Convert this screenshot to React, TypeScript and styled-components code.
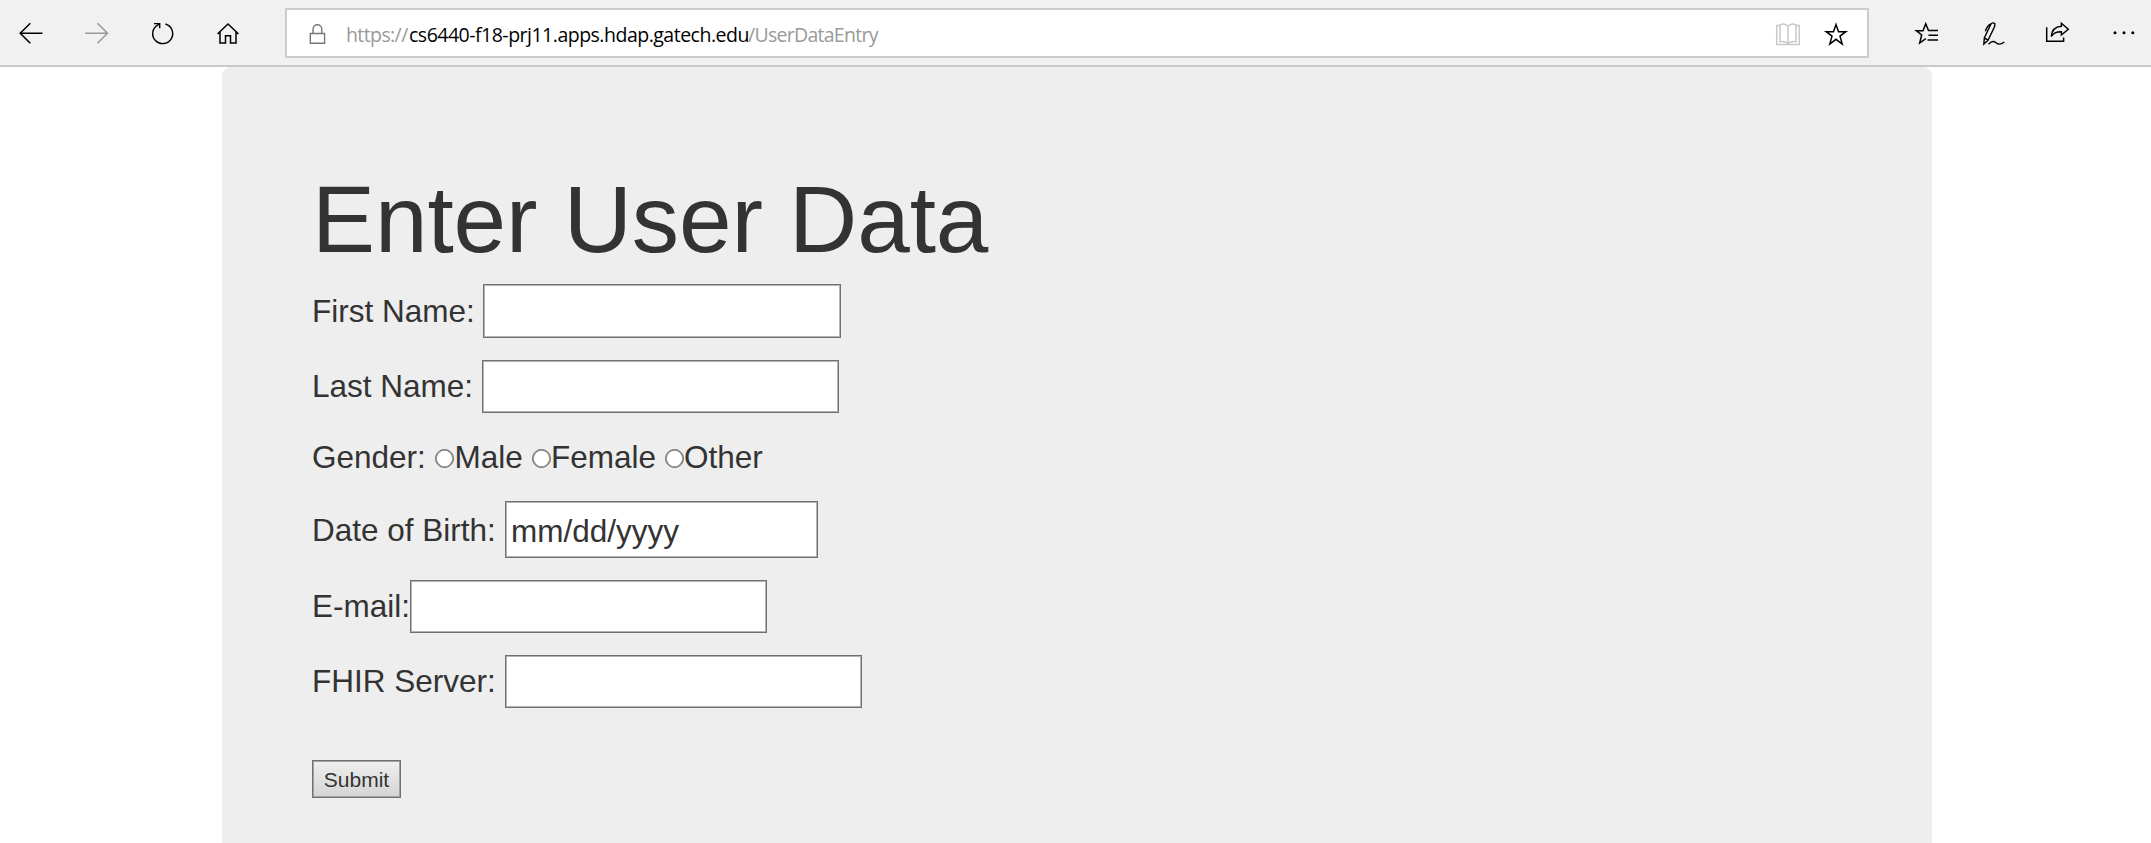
import React from "react";
import styled, { createGlobalStyle } from "styled-components";

const GlobalStyle = createGlobalStyle`
  * { box-sizing: border-box; }
  html, body { margin: 0; padding: 0; background: #fff; overflow: hidden; }
`;

const Page = styled.div`
  display: flex;
  flex-direction: column;
  height: 843px;
  overflow: hidden;
  font-family: "Liberation Sans", Arial, sans-serif;
  color: #333;
`;

const Toolbar = styled.header`
  display: flex;
  align-items: flex-start;
  flex: none;
  height: 67px;
  background: #f1f1f1;
  border-bottom: 2px solid #c9c9c9;
`;

const NavGroup = styled.nav`
  display: flex;
  gap: 34px;
  width: 285px;
  padding: 17px 0 0 15px;
`;

const ActionGroup = styled.div`
  display: flex;
  gap: 34px;
  padding: 17px 0 0 41px;
`;

const IconButton = styled.button<{ $color?: string; $w?: number }>`
  flex: none;
  width: ${(p) => p.$w ?? 32}px;
  height: 32px;
  padding: 0;
  border: 0;
  background: none;
  color: ${(p) => p.$color ?? "#000"};
  svg { display: block; }
`;

const AddressBar = styled.div`
  display: flex;
  flex: none;
  width: 1584px;
  height: 50px;
  margin-top: 8px;
  padding: 7px 15px 0 14px;
  background: #fff;
  border: 2px solid #ccc;
`;

const Url = styled.div`
  display: flex;
  flex: 1;
  padding-left: 13px;
  font: 19.5px/36px "Open Sans", "Segoe UI", sans-serif;
  white-space: pre;
`;

const UrlPart = styled.span<{ $strong?: boolean; $w: number; $spacing: number }>`
  width: ${(p) => p.$w}px;
  color: ${(p) => (p.$strong ? "#000" : "#999")};
  letter-spacing: ${(p) => p.$spacing}px;
`;

const Jumbotron = styled.main`
  flex: 1;
  width: 1710px;
  margin-left: 222px;
  padding: 99px 90px 0;
  background: #eee;
  border-radius: 9px 9px 0 0;
`;

const Title = styled.h1`
  margin: 0;
  font-size: 94.5px;
  font-weight: 400;
  line-height: 106px;
  letter-spacing: -0.08px;
`;

const Form = styled.form`
  display: flex;
  flex-direction: column;
  align-items: flex-start;
  padding-top: 12px;
  font-size: 31.5px;
`;

const Row = styled.div<{ $h: number; $gap: number; $line?: number }>`
  display: flex;
  height: ${(p) => p.$h}px;
  margin-bottom: ${(p) => p.$gap}px;
  line-height: ${(p) => p.$line ?? p.$h}px;
  white-space: pre;
`;

const Label = styled.label<{ $w?: number }>`
  width: ${(p) => (p.$w ? `${p.$w}px` : "auto")};
`;

const Input = styled.input<{ $w?: number }>`
  width: ${(p) => p.$w ?? 357}px;
  height: 100%;
  padding: 3px 5px 0;
  background: #fff;
  border: 1px solid #707070;
  box-shadow: inset 0 0 0 1px #b4b4b4;
  border-radius: 0;
  outline: 0;
  font: inherit;
  line-height: normal;
  color: #333;
  &::placeholder { color: #333; opacity: 1; }
`;

const Radio = styled.input`
  appearance: none;
  width: 19px;
  height: 19px;
  margin: 17px 0.5px 0 0;
  background: #fff;
  border: 1px solid #666;
  box-shadow: inset 0 0 0 0.8px #858585;
  border-radius: 50%;
`;

const Option = styled.label<{ $w: number }>`
  display: flex;
  width: ${(p) => p.$w}px;
`;

const Submit = styled.button`
  width: 89px;
  height: 38px;
  padding: 1px 0 0;
  background: linear-gradient(#efefef, #d4d4d4);
  border: 1px solid #707070;
  box-shadow: inset 0 0 0 1px #a2a2a2;
  font: 21px/34px "Liberation Sans", Arial, sans-serif;
  color: #333;
`;

type IconProps = { children: React.ReactNode; w?: number; stroke?: number };
const Icon = ({ children, w = 32, stroke = 1.5 }: IconProps) => (
  <svg width={w} height="32" viewBox={`0 0 ${w} 32`} fill="none" stroke="currentColor" strokeWidth={stroke}>
    {children}
  </svg>
);

const STAR = "M16 7.6 18.5 14.7H25.8L20 19.1 22.2 27 16 22.3 9.8 27 12 19.1 6.2 14.7H13.5Z";

export default function App() {
  return (
    <Page>
      <GlobalStyle />
      <Toolbar>
        <NavGroup>
          <IconButton aria-label="Back"><Icon><path d="M27.5 16.3H5.2M15.3 6.3 5.2 16.3 15.3 26.3" /></Icon></IconButton>
          <IconButton aria-label="Forward" $color="#999"><Icon><path d="M4.2 16.3H26.5M16.4 6.3 26.5 16.3 16.4 26.3" /></Icon></IconButton>
          <IconButton aria-label="Refresh"><Icon stroke={1.4}><path d="M18.4 7A10 10 0 1 1 11 7.8L12.7 6.5M7 6.6H12.7V11.3" /></Icon></IconButton>
          <IconButton aria-label="Home"><Icon><path d="M4.5 17 15 7 25.5 17M7 15V26H12.5V18.7H17.5V26H23V15" /></Icon></IconButton>
        </NavGroup>
        <AddressBar>
          <IconButton as="span" $color="#777"><Icon stroke={1.4}><path d="M9.3 16.5H23.6V26.3H9.3ZM12 16.5V12.2a4.4 4.4 0 0 1 8.8 0V16.5" /></Icon></IconButton>
          <Url>
            <UrlPart $w={63} $spacing={-0.6}>https://</UrlPart>
            <UrlPart $w={339} $spacing={-0.5} $strong>cs6440-f18-prj11.apps.hdap.gatech.edu</UrlPart>
            <UrlPart $w={140} $spacing={-0.72}>/UserDataEntry</UrlPart>
          </Url>
          <IconButton aria-label="Reading view" $color="#c8c8c8" $w={48}><Icon w={48}><path d="M8 8.5H4.7V27.5H27.3V8.5H24M16 9V26.5M16 9Q12 5.7 8 7.8V24.8Q12 23.5 16 26.3 20 23.5 24 24.8V7.8Q20 5.7 16 9" /></Icon></IconButton>
          <IconButton aria-label="Add to favorites"><Icon stroke={1.5}><path d={STAR} /></Icon></IconButton>
        </AddressBar>
        <ActionGroup>
          <IconButton aria-label="Favorites"><Icon><path d="M28 13.5H18.5L15.7 6.8 13 13.7H6.3L11.7 18 9.7 26 15.8 21.7M18.5 18.3H28M17.5 23H28" /></Icon></IconButton>
          <IconButton aria-label="Notes"><Icon stroke={1.4}><path d="M7.8 27 8.4 20.8 15 7Q16.8 4.8 18.9 6.8L18.6 9.5 12 23.2ZM8.4 20.8 12 23.2M14.8 7Q11.5 8 9.3 14.2M12.5 27.3Q16.5 22.8 20 25.8T28.3 25" /></Icon></IconButton>
          <IconButton aria-label="Share"><Icon><path d="M4.7 10.3V24.3H21.6V20.5M19.4 6.3 26.3 12.2 19.4 18V14.7Q12 14.6 9.3 19.5 10 10 19.4 9.3Z" /></Icon></IconButton>
          <IconButton aria-label="More"><Icon><g fill="currentColor" stroke="none"><circle cx="7" cy="15.8" r="1.5" /><circle cx="16" cy="15.8" r="1.5" /><circle cx="24.8" cy="15.8" r="1.5" /></g></Icon></IconButton>
        </ActionGroup>
      </Toolbar>
      <Jumbotron>
        <Title>Enter User Data</Title>
        <Form>
          <Row $h={54} $gap={22}><Label $w={171}>First Name:</Label><Input $w={358} /></Row>
          <Row $h={53} $gap={19}><Label $w={170}>Last Name:</Label><Input /></Row>
          <Row $h={51} $gap={18}>
            <Label $w={123}>Gender:</Label>
            <Option $w={96.5}><Radio type="radio" name="gender" />Male</Option>
            <Option $w={133}><Radio type="radio" name="gender" />Female</Option>
            <Option $w={120}><Radio type="radio" name="gender" />Other</Option>
          </Row>
          <Row $h={57} $gap={22} $line={59}><Label $w={193}>Date of Birth:</Label><Input $w={313} placeholder="mm/dd/yyyy" /></Row>
          <Row $h={53} $gap={22}><Label $w={98}>E-mail:</Label><Input /></Row>
          <Row $h={53} $gap={52}><Label $w={193}>FHIR Server:</Label><Input /></Row>
          <Submit type="button">Submit</Submit>
        </Form>
      </Jumbotron>
    </Page>
  );
}
